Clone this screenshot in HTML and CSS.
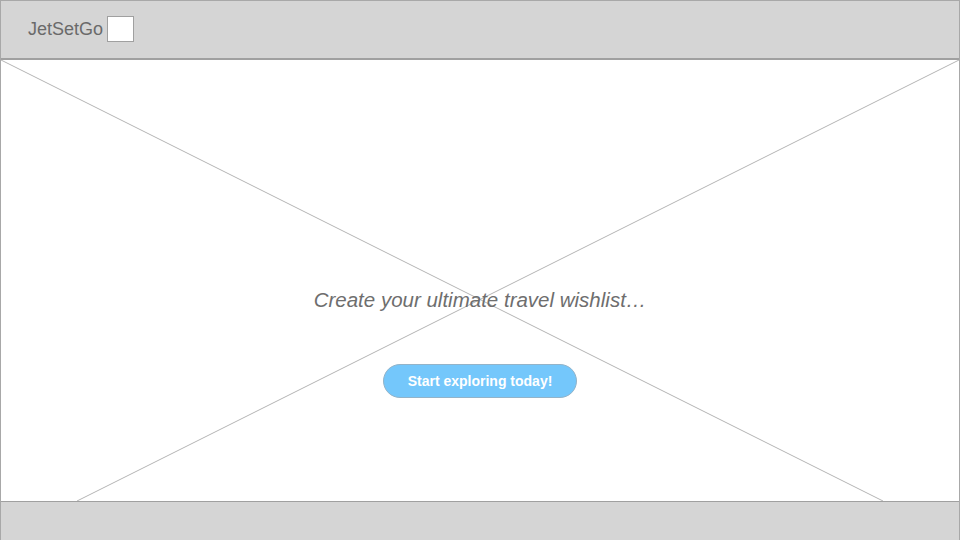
FILE: index.html
```html
<!DOCTYPE html>
<html>
<head>
<meta charset="utf-8">
<link rel="stylesheet" href="styles.css">
</head>
<body>
<div class="page">
  <header class="topbar">
    <span class="brand">JetSetGo</span>
    <span class="brand-box"></span>
  </header>
  <main class="hero">
    <svg class="hero-x" viewBox="0 0 958 441" preserveAspectRatio="none">
      <line x1="0" y1="0" x2="882" y2="441" stroke="#b4b4b4" stroke-width="1"/>
      <line x1="958" y1="0" x2="76" y2="441" stroke="#b4b4b4" stroke-width="1"/>
    </svg>
    <div class="hero-content">
      <p class="tagline">Create your ultimate travel wishlist…</p>
      <button class="cta">Start exploring today!</button>
    </div>
  </main>
  <footer class="bottombar"></footer>
</div>
</body>
</html>
```
FILE: styles.css
```css
html, body {
  margin: 0;
  padding: 0;
  background: #ffffff;
}
.page {
  width: 960px;
  height: 540px;
  box-sizing: border-box;
  border-left: 1px solid #a8a8a8;
  border-right: 1px solid #a8a8a8;
  display: flex;
  flex-direction: column;
  overflow: hidden;
  font-family: "Liberation Sans", Arial, sans-serif;
}
.topbar {
  height: 60px;
  box-sizing: border-box;
  background: #d5d5d5;
  border-top: 1px solid #a8a8a8;
  border-bottom: 2px solid #a0a0a0;
  display: flex;
  align-items: center;
  padding-left: 27px;
  gap: 4px;
  padding-bottom: 1px;
}
.brand {
  font-size: 18px;
  color: #6a6a6a;
}
.brand-box {
  width: 25px;
  height: 24px;
  background: #ffffff;
  border: 1px solid #a0a0a0;
}
.hero {
  flex: 1;
  display: grid;
  background: #ffffff;
}
.hero-x {
  grid-area: 1 / 1;
  width: 100%;
  height: 100%;
  display: block;
}
.hero-content {
  grid-area: 1 / 1;
  display: flex;
  flex-direction: column;
  align-items: center;
  padding-top: 228px;
}
.tagline {
  margin: 0;
  font-size: 20.5px;
  line-height: 24px;
  font-style: italic;
  color: #6e6e6e;
}
.cta {
  margin-top: 52px;
  width: 194px;
  height: 34px;
  box-sizing: border-box;
  border-radius: 17px;
  border: 1px solid #93b3c8;
  background: #74c7fb;
  color: #ffffff;
  font-family: "Liberation Sans", Arial, sans-serif;
  font-weight: bold;
  font-size: 14px;
  padding: 0;
}
.bottombar {
  height: 39px;
  box-sizing: border-box;
  background: #d5d5d5;
  border-top: 1px solid #a0a0a0;
}
```
